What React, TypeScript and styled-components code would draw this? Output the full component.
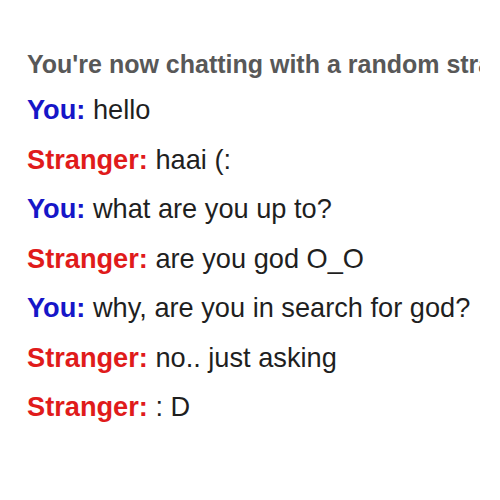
import React from "react";
import styled, { createGlobalStyle } from "styled-components";

const GlobalStyle = createGlobalStyle`
  html, body {
    margin: 0;
    padding: 0;
    background: #ffffff;
  }
`;

const ChatLog = styled.div`
  width: 453px;
  padding: 48px 0 0 27px;
  overflow: hidden;
  font-family: "Liberation Sans", Arial, sans-serif;
`;

const StatusLine = styled.div`
  font-size: 25px;
  font-weight: bold;
  color: #585858;
  white-space: nowrap;
  line-height: 32px;
  margin-bottom: 5px;
`;

const MessageRow = styled.div`
  font-size: 27.2px;
  line-height: 49.5px;
  color: #1f1f1f;
  white-space: nowrap;
`;

const Sender = styled.span<{ $who: "you" | "stranger" }>`
  font-weight: bold;
  color: ${(p) => (p.$who === "you" ? "#1616c8" : "#e01b1b")};
`;

const messages: { who: "you" | "stranger"; text: string }[] = [
  { who: "you", text: "hello" },
  { who: "stranger", text: "haai (:" },
  { who: "you", text: "what are you up to?" },
  { who: "stranger", text: "are you god O_O" },
  { who: "you", text: "why, are you in search for god?" },
  { who: "stranger", text: "no.. just asking" },
  { who: "stranger", text: ": D" },
];

export default function App() {
  return (
    <>
      <GlobalStyle />
      <ChatLog>
        <StatusLine>You're now chatting with a random stranger. Say hi!</StatusLine>
        {messages.map((m, i) => (
          <MessageRow key={i}>
            <Sender $who={m.who}>{m.who === "you" ? "You:" : "Stranger:"}</Sender> {m.text}
          </MessageRow>
        ))}
      </ChatLog>
    </>
  );
}
